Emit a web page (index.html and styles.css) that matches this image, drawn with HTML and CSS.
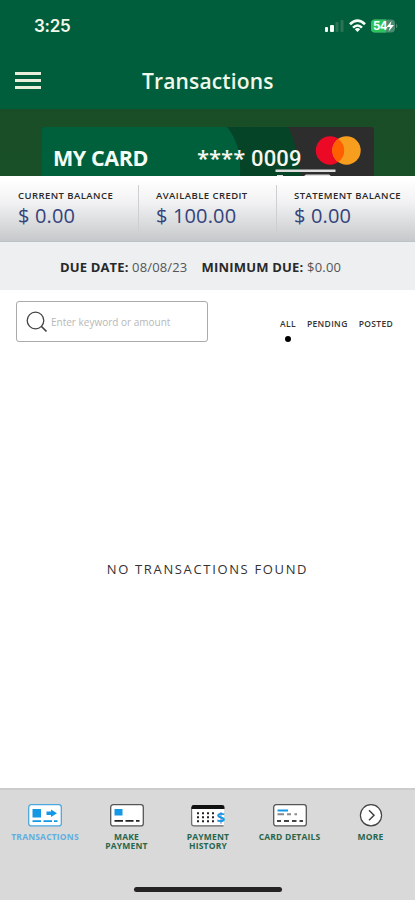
FILE: index.html
```html
<!DOCTYPE html>
<html lang="en">
<head>
<meta charset="utf-8">
<title>Transactions</title>
<link rel="stylesheet" href="styles.css">
</head>
<body>
<div class="app">
  <header class="header">
    <div class="status">
      <span class="time">3:25</span>
      <svg class="status-icons" width="76" height="16" viewBox="0 0 76 16">
        <g fill="#f5fff5"><rect x="1" y="9" width="3" height="5" rx="1"/><rect x="6" y="7" width="4" height="7" rx="1"/></g>
        <g fill="#2b7354"><rect x="11.500" y="4" width="3" height="10" rx="1"/><rect x="16.500" y="2" width="3" height="12" rx="1"/></g>
        <g fill="none" stroke="#f5fff5" stroke-width="2.600"><path d="M26 6.200Q33.500-.800 41 6.200M29 9.600Q33.500 5.400 38 9.600"/></g>
        <path d="M30.800 11.200Q33.500 8.900 36.200 11.200L33.500 14Z" fill="#f5fff5"/>
        <rect x="47" y="1.500" width="24" height="13" rx="4" fill="#488b70"/>
        <path d="M51 1.500H62V14.500H51Q47 14.500 47 10.500V5.500Q47 1.500 51 1.500Z" fill="#2cc35c"/>
        <path d="M72 5.500Q75 8 72 10.500Z" fill="#488b70"/>
        <text x="49" y="12.300" class="battery">54</text>
        <path d="M67.500 3L62.500 9H66L64.500 13.500L70 7H66.500Z" fill="#fff"/>
      </svg>
    </div>
    <div class="titlebar">
      <div class="menu"><i></i><i></i><i></i></div>
      <h1>Transactions</h1>
    </div>
  </header>
  <section class="hero">
    <div class="card">
      <svg class="card-art" width="332" height="49" viewBox="0 0 332 49">
        <rect width="332" height="60" rx="3" fill="#2e2d2d"/>
        <path d="M3 0H246Q255 16 259 49H0V3Q0 0 3 0Z" fill="#064427"/>
        <path d="M3 0H185Q200 18 198 49H0V3Q0 0 3 0Z" fill="#00603b"/>
        <circle cx="288" cy="23.500" r="14.200" fill="#eb0925"/>
        <circle cx="304.500" cy="23.500" r="14.200" fill="#f79e1f"/>
        <path d="M296.250 11.900A14.200 14.200 0 0 1 296.250 35.100A14.200 14.200 0 0 1 296.250 11.900Z" fill="#ff5f00"/>
        <path d="M233.500 42.500H293.500V45H233.500ZM235 48H241V49H235ZM264 47.500H287L289 49H262Z" fill="#dedede"/>
      </svg>
      <span class="card-name">MY CARD</span>
      <span class="card-number">**** <span class="digits">0009</span></span>
    </div>
  </section>
  <section class="balances">
    <div class="balance"><span class="label">CURRENT BALANCE</span><span class="amount">$ 0.00</span></div>
    <div class="balance"><span class="label">AVAILABLE CREDIT</span><span class="amount">$ 100.00</span></div>
    <div class="balance"><span class="label">STATEMENT BALANCE</span><span class="amount">$ 0.00</span></div>
  </section>
  <section class="due">
    <span class="due-date"><b>DUE DATE:</b> 08/08/23</span>
    <span class="minimum"><b>MINIMUM DUE:</b> $0.00</span>
  </section>
  <section class="filters">
    <div class="search">
      <svg width="22" height="22" viewBox="0 0 22 22" fill="none" stroke="#444" stroke-width="1.300"><circle cx="9.500" cy="9.500" r="8.300"/><path d="M15.500 15.500L20.500 20.500" stroke-width="1.700"/></svg>
      <span>Enter keyword or amount</span>
    </div>
    <nav class="types"><span class="selected">ALL</span><span>PENDING</span><span>POSTED</span></nav>
  </section>
  <main class="empty">NO TRANSACTIONS FOUND</main>
  <footer class="tabs">
    <div class="tab active">
      <svg width="34" height="23" viewBox="0 0 34 23"><rect x=".7" y=".7" width="32.600" height="21.200" rx="2.500" fill="#fff" stroke="#4ba7df" stroke-width="1.300"/><g fill="#1598e3"><rect x="4.500" y="5" width="8.500" height="8.500"/><path d="M18.500 7.500H23V5.500L29 9.300L23 13V11H18.500ZM4.500 16.200H13V17.900H4.500ZM15.500 16.200H24V17.900H15.500ZM26 16.200H29.500V17.900H26Z"/></g></svg>
      <span>TRANSACTIONS</span>
    </div>
    <div class="tab">
      <svg width="34" height="23" viewBox="0 0 34 23"><rect x=".7" y=".7" width="32.600" height="21.200" rx="2.500" fill="#fff" stroke="#555" stroke-width="1.300"/><rect x="4.500" y="5" width="8" height="6.500" fill="#1598e3"/><path d="M4.500 16H13V17.800H4.500ZM15.500 16H23.500V17.800H15.500ZM26 16H29.500V17.800H26Z" fill="#222"/></svg>
      <span>MAKE<br>PAYMENT</span>
    </div>
    <div class="tab">
      <svg width="34" height="23" viewBox="0 0 34 23"><path d="M.7 3V20Q.7 21.800 3 21.800H32.500" fill="#fff" stroke="#666" stroke-width="1.200"/><path d="M1.500 5H33V21H2Z" fill="#fff"/><path d="M2.500 1H31Q33.500 1 33.500 3V5H.5V3Q.5 1 2.500 1Z" fill="#111"/><path d="M6 9.200H24M6 13.200H24M6 17.200H24" stroke="#222" stroke-width="2" stroke-dasharray="2 3"/><text class="dollar" x="25.500" y="18.500">$</text></svg>
      <span>PAYMENT<br>HISTORY</span>
    </div>
    <div class="tab">
      <svg width="34" height="23" viewBox="0 0 34 23"><rect x=".7" y=".7" width="32.600" height="21.200" rx="2.500" fill="#fff" stroke="#555" stroke-width="1.300"/><path d="M4.500 6.500H15" stroke="#1598e3" stroke-width="2"/><path d="M4.500 10.300H11M14 10.300H18M21.500 10.300H24" stroke="#888" stroke-width="2"/><path d="M4 17H8M11 17H16M19 17H23.500M26.500 17H30" stroke="#444" stroke-width="1.800"/></svg>
      <span>CARD DETAILS</span>
    </div>
    <div class="tab">
      <svg width="24" height="23" viewBox="0 0 24 23"><circle cx="12" cy="11.300" r="10.600" fill="#fff" stroke="#444" stroke-width="1.200"/><path d="M10 6.300L15 11.300L10 16.300" fill="none" stroke="#444" stroke-width="1.500"/></svg>
      <span>MORE</span>
    </div>
    <div class="home-indicator"></div>
  </footer>
</div>
</body>
</html>
```
FILE: styles.css
```css
* { box-sizing: border-box; }
body { margin: 0; font-family: "Open Sans", sans-serif; background: #fff; }
.app { width: 415px; height: 900px; display: flex; flex-direction: column; overflow: hidden; white-space: nowrap; }
.header { height: 109px; flex: none; background: #005e3c; color: #f2f8e9; }
.status { height: 52px; display: flex; justify-content: space-between; padding: 15px 15px 0 34px; }
.time { font: 600 17px/22px Inter, sans-serif; letter-spacing: -.3px; }
.status-icons { margin-top: 3px; }
.battery { font: 700 11.5px Inter, sans-serif; letter-spacing: -.5px; fill: #fff; }
.titlebar { display: grid; grid-template-columns: 127px 1fr; align-items: center; height: 57px; padding-left: 15px; }
.menu { width: 26px; height: 17px; display: flex; flex-direction: column; justify-content: space-between; }
.menu i { height: 3px; background: #e9eedb; }
h1 { margin: 0; font-size: 21px; font-weight: 600; line-height: 28px; letter-spacing: .15px; }
.hero { height: 67px; flex: none; padding: 18px 0 0 42px; background: linear-gradient(#194d26, #195027); overflow: hidden; }
.card { display: grid; grid-template-columns: 144px 1fr; width: 332px; padding-left: 11px; }
.card > * { grid-row: 1; }
.card-art { grid-column: 1 / -1; margin-left: -11px; }
.card-name { grid-column: 1; font-weight: 700; font-size: 21.5px; line-height: 30px; padding-top: 16px; letter-spacing: -.4px; color: #f5fff7; }
.card-number { grid-column: 2; font-weight: 600; font-size: 22px; line-height: 30px; padding-top: 15px; color: #f7f7ef; }
.digits { font-family: Roboto, sans-serif; font-weight: 500; letter-spacing: .2px; }
.balances { height: 66px; flex: none; display: grid; grid-template-columns: 138px 138px 139px; background: linear-gradient(#fff 5%, #f2f2f3 40%, #c6c9cb); border-bottom: 1px solid #bcc2c5; }
.balance { height: 50px; margin-top: 9px; display: flex; flex-direction: column; padding-left: 17px; border-left: 1px solid #cdd0d3; }
.balance:first-child { border: 0; padding-left: 18px; }
.label { font-size: 9.5px; line-height: 14px; font-weight: 600; letter-spacing: .44px; color: #292929; margin-top: 4px; }
.amount { font-size: 20px; line-height: 26px; letter-spacing: .15px; color: #34437c; }
.due { height: 48px; flex: none; display: flex; gap: 14px; padding: 2px 0 0 60px; align-items: center; background: #edeff1; font-size: 13px; letter-spacing: .15px; color: #555; }
.minimum { letter-spacing: .2px; }
.due b { font-weight: 700; color: #292929; }
.filters { height: 72px; flex: none; padding: 11px 0 0 16px; display: flex; }
.search { width: 192px; height: 41px; border: 1px solid #aaa; border-radius: 3px; display: flex; align-items: center; gap: 3px; padding-left: 9px; font-size: 10px; color: #b7b7b7; }
.types { display: flex; margin-left: 72px; padding-top: 16px; gap: 11px; font-size: 8.5px; line-height: 14px; letter-spacing: .35px; font-weight: 600; color: #333; }
.selected { display: flex; flex-direction: column; align-items: center; }
.selected::after { content: ""; width: 6px; height: 6px; border-radius: 50%; background: #000; margin-top: 5px; }
.empty { flex: 1; padding-top: 198px; text-align: center; font-size: 13px; line-height: 18px; letter-spacing: 1.65px; color: #333; }
.tabs { height: 112px; flex: none; background: #d9d9d9; border-top: 2px solid #ccc; display: grid; grid-template-columns: 82px 81px 82px 81px 81px; grid-template-rows: 97px 5px; padding-left: 4px; }
.tab { display: flex; flex-direction: column; align-items: center; padding-top: 14px; font-size: 8.5px; line-height: 9px; letter-spacing: .18px; font-weight: 700; color: #27664c; text-align: center; }
.tab span { margin-top: 5px; }
.active { color: #5fafe0; }
.dollar { font: 700 15px "Open Sans", sans-serif; fill: #1598e3; }
.home-indicator { grid-column: 1 / -1; width: 148px; height: 5px; margin-left: 130px; border-radius: 3px; background: #252324; }
```
